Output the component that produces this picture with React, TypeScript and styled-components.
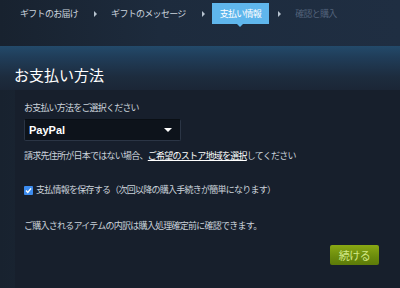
import React, { useState } from "react";
import styled, { createGlobalStyle } from "styled-components";

const GlobalStyle = createGlobalStyle`
  html, body {
    margin: 0;
    padding: 0;
    background: #1b2838;
  }
  body {
    font-family: "Noto Sans CJK JP", "Noto Sans", Arial, sans-serif;
    color: #c6d4df;
  }
`;

const Page = styled.div`
  width: 400px;
  height: 288px;
  overflow: hidden;
  display: flex;
  flex-direction: column;
  background: linear-gradient(90deg, #18222f 0%, #1d2b3d 40%, #1f2e42 100%);
`;

const StepsBar = styled.div`
  height: 46px;
  display: flex;
  align-items: flex-start;
  padding: 3px 0 0 20px;
  box-sizing: border-box;
`;

const Step = styled.div<{ $state: "done" | "active" | "todo" }>`
  position: relative;
  height: 21px;
  display: flex;
  align-items: center;
  padding: 0 ${(p) => (p.$state === "active" ? "8px" : "0")};
  margin: 0 ${(p) => (p.$state === "active" ? "-7px" : "0")};
  font-size: 9px;
  letter-spacing: -0.7px;
  color: ${(p) =>
    p.$state === "active" ? "#ffffff" : p.$state === "done" ? "#cbd4de" : "#52627a"};
  background: ${(p) => (p.$state === "active" ? "#5fb6ec" : "transparent")};

  &::after {
    content: "";
    display: ${(p) => (p.$state === "active" ? "block" : "none")};
    position: absolute;
    left: 50%;
    margin-left: -3px;
    bottom: -3px;
    border-left: 3px solid transparent;
    border-right: 3px solid transparent;
    border-top: 3px solid #5fb6ec;
  }
`;

const Arrow = styled.div`
  width: 0;
  height: 0;
  margin: 8px 14px 0 16px;
  border-top: 3px solid transparent;
  border-bottom: 3px solid transparent;
  border-left: 3px solid #b7c3cf;
`;

const Hero = styled.div`
  height: 44px;
  display: flex;
  align-items: flex-end;
  padding: 0 0 5px 14px;
  box-sizing: border-box;
  background: linear-gradient(180deg, #234a6a 0%, #203d59 25%, #1d2c3e 70%, #1b2636 100%);
`;

const Title = styled.h1`
  margin: 0;
  font-size: 15px;
  line-height: 20px;
  font-weight: 400;
  color: #ffffff;
`;

const Panel = styled.div`
  flex: 1;
  margin-left: 15px;
  background: #171f2c;
  padding: 11px 0 0 9px;
  display: flex;
  flex-direction: column;
`;

const Label = styled.div`
  font-size: 9px;
  letter-spacing: -0.8px;
  color: #cbd3db;
  line-height: 14px;
`;

const Select = styled.div`
  margin-top: 4px;
  width: 157px;
  height: 22px;
  box-sizing: border-box;
  border-radius: 2px;
  background: #0d131b;
  border: 1px solid #2b3545;
  border-top-color: #0a0f15;
  display: flex;
  align-items: center;
  justify-content: space-between;
  padding: 0 8px 0 4px;
  font-family: "Liberation Sans", Arial, sans-serif;
  font-weight: 700;
  font-size: 11px;
  color: #ffffff;
`;

const Caret = styled.span`
  width: 0;
  height: 0;
  border-left: 4px solid transparent;
  border-right: 4px solid transparent;
  border-top: 4px solid #ffffff;
`;

const Text = styled.div<{ $top: number }>`
  margin-top: ${(p) => p.$top}px;
  font-size: 9px;
  letter-spacing: -0.75px;
  line-height: 14px;
  color: #cbd3db;
  display: flex;
  align-items: center;
`;

const Link = styled.a`
  color: #ffffff;
  text-decoration: underline;
`;

const Check = styled.span`
  width: 9px;
  height: 9px;
  border-radius: 1px;
  background: #3c8cf0;
  margin-right: 3px;
  display: inline-flex;
  align-items: center;
  justify-content: center;
`;

const ButtonRow = styled.div`
  display: flex;
  justify-content: flex-end;
  padding-right: 21px;
  margin-top: 12px;
`;

const Button = styled.button`
  width: 49px;
  height: 20px;
  border: none;
  border-radius: 2px;
  background: linear-gradient(180deg, #8aa814 0%, #6a8a0c 60%, #5c7a08 100%);
  color: #d2e885;
  font-family: "Noto Sans CJK JP", sans-serif;
  font-size: 11px;
  letter-spacing: -0.5px;
  padding: 0;
  cursor: pointer;
`;

export default function App() {
  const [save, setSave] = useState(true);
  return (
    <Page>
      <GlobalStyle />
      <StepsBar>
        <Step $state="done">ギフトのお届け</Step>
        <Arrow />
        <Step $state="done">ギフトのメッセージ</Step>
        <Arrow />
        <Step $state="active">支払い情報</Step>
        <Arrow />
        <Step $state="todo">確認と購入</Step>
      </StepsBar>
      <Hero>
        <Title>お支払い方法</Title>
      </Hero>
      <Panel>
        <Label>お支払い方法をご選択ください</Label>
        <Select>
          PayPal
          <Caret />
        </Select>
        <Text $top={8}>
          請求先住所が日本ではない場合、<Link>ご希望のストア地域を選択</Link>してください
        </Text>
        <Text $top={20} onClick={() => setSave(!save)}>
          <Check>
            {save && (
              <svg width="7" height="7" viewBox="0 0 7 7">
                <path d="M1 3.6 L2.8 5.4 L6 1.4" stroke="#fff" strokeWidth="1.4" fill="none" />
              </svg>
            )}
          </Check>
          支払情報を保存する（次回以降の購入手続きが簡単になります）
        </Text>
        <Text $top={22}>ご購入されるアイテムの内訳は購入処理確定前に確認できます。</Text>
        <ButtonRow>
          <Button>続ける</Button>
        </ButtonRow>
      </Panel>
    </Page>
  );
}
